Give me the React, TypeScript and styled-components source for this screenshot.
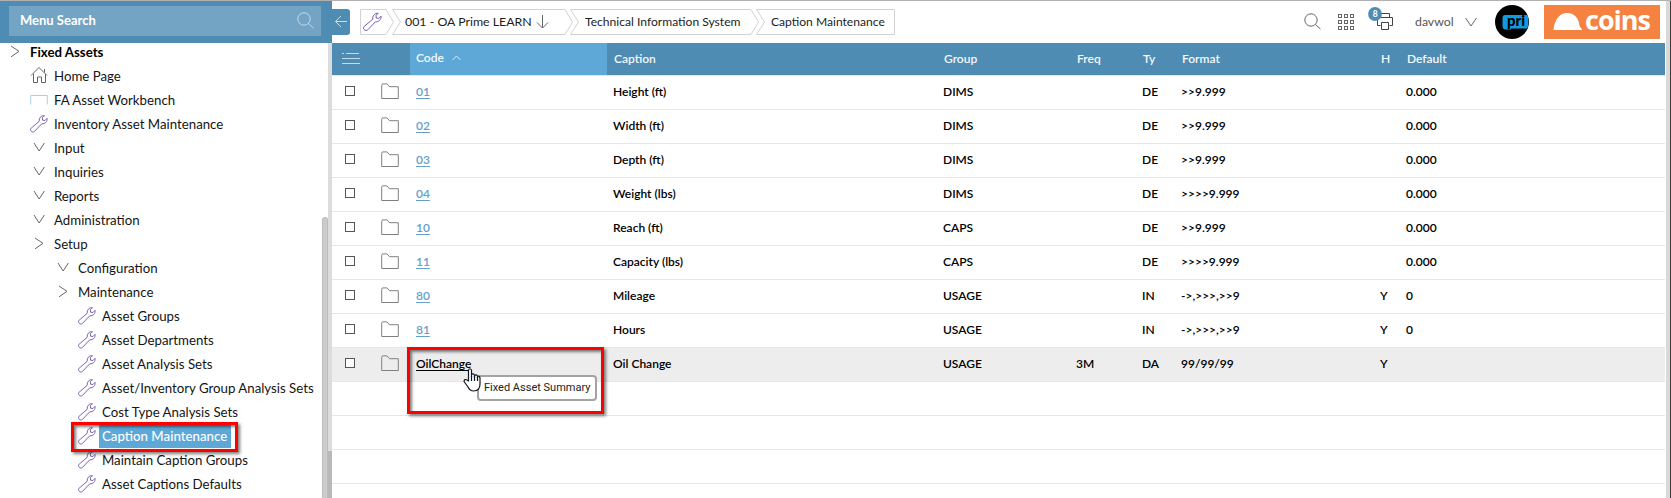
import React from 'react';
import styled, { createGlobalStyle } from 'styled-components';

const Global = createGlobalStyle`
  * { box-sizing: border-box; }
  html, body { margin: 0; padding: 0; overflow: hidden; background: #fff; }
  body { font-family: Lato, "Liberation Sans", sans-serif; font-size: 13px; color: #000; }
`;

const blue = '#4f8cb3';
const lightBlue = '#5ea8d7';

const Page = styled.div`
  width: 1671px; height: 498px; display: flex; overflow: hidden; position: relative;
  border-top: 1px solid #b3b0b3;
`;
const Sidebar = styled.aside`
  width: 332px; flex: none; display: flex; flex-direction: column;
`;
const SearchBar = styled.div`
  height: 42px; flex: none; background: ${blue}; padding: 5px 11px 7px 9px; position: relative; z-index: 1;
`;
const SearchField = styled.div`
  height: 30px; background: #74a4c3; color: #fff; font-weight: 700; font-size: 13px;
  display: flex; align-items: center; justify-content: space-between; padding: 0 7px 2px 11px;
`;
const SideBody = styled.div`
  flex: 1; display: flex; min-height: 0;
`;
const Tree = styled.div`
  flex: 1; margin-top: -4px;
`;
const TreeRow = styled.div<{ $level: number; $bold?: boolean }>`
  height: 24px; display: flex; align-items: center; white-space: nowrap; font-size: 13.25px;
  padding-left: ${p => 6 + p.$level * 24}px; color: ${p => (p.$bold ? '#000' : '#141414')};
  font-weight: ${p => (p.$bold ? 700 : 400)};
`;
const TreeIcon = styled.span`
  width: 18px; height: 18px; margin-right: 3px; display: flex; flex: none;
`;
const TreeLabel = styled.span<{ $active?: boolean }>`
  height: 23px; line-height: 22px; margin-top: 3px; padding: 0 4px 0 3px;
  background: ${p => (p.$active ? lightBlue : 'transparent')};
  color: ${p => (p.$active ? '#fff' : 'inherit')};
  font-weight: ${p => (p.$active ? 500 : 'inherit')};
`;
const ScrollTrack = styled.div`
  width: 6px; padding-top: 174px; display: flex; flex: none;
`;
const ScrollThumb = styled.div`
  flex: 1; background: #cbcbcb; border: 1px solid #bdbdbd; border-bottom: 0; border-radius: 3px 3px 0 0;
`;
const Splitter = styled.div`
  width: 4px; flex: none; background: linear-gradient(#dcdcdc 408px, #b9b9b9 408px);
`;
const Main = styled.main`
  width: 1333px; flex: none; display: flex; flex-direction: column;
`;
const TopBar = styled.header`
  height: 42px; flex: none; display: flex; align-items: flex-start; justify-content: space-between;
`;
const TopLeft = styled.div`
  display: flex; padding-top: 8px;
`;
const Collapse = styled.div`
  width: 18px; height: 26px; background: ${blue}; border-radius: 0 3px 3px 0; margin-right: 10px;
  display: flex; align-items: center; justify-content: center;
`;
const Crumbs = styled.nav`
  display: flex; height: 26px;
`;
const Crumb = styled.div<{ $w: number; $pad: number; $gap: number; $size?: number }>`
  width: ${p => p.$w}px; padding: 0 0 1px ${p => p.$pad}px; margin-right: ${p => p.$gap}px; height: 26px;
  position: relative; display: flex; align-items: center; white-space: nowrap; color: #1c1c1c;
  font-size: ${p => p.$size ?? 12.1}px;
  > svg.frame { position: absolute; left: 0; top: 0; }
`;
const CrumbArrow = styled.svg`
  margin-left: 3px;
`;
const TopRight = styled.div`
  display: flex; align-items: flex-start; padding-right: 5px; padding-top: 4px;
`;
const Tool = styled.div<{ $mr: number; $mt: number }>`
  display: flex; margin-right: ${p => p.$mr}px; margin-top: ${p => p.$mt}px;
`;
const User = styled.span`
  margin: 8px 13px 0 0; width: 37px; line-height: 17px; font-size: 12.3px; color: #555;
`;
const Avatar = styled.div`
  width: 34px; height: 34px; margin-right: 15px; display: flex;
`;
const Brand = styled.div`
  width: 116px; height: 34px; background: #f58241; display: flex;
`;
const cols = '78px 197px 330px 133px 66px 39px 199px 26px 1fr';
const HeadRow = styled.div`
  height: 32px; flex: none; background: ${blue}; color: #f4f8fb; display: grid;
  grid-template-columns: ${cols}; font-weight: 600; font-size: 12px;
`;
const HeadCell = styled.div<{ $sorted?: boolean }>`
  display: flex; align-items: center; padding: 0 0 1px 7px;
  ${p => p.$sorted && `background: ${lightBlue}; padding: 0 0 3px 6px; gap: 8px;`}
`;
const HeadIcon = styled.div`
  display: flex; padding: 9px 0 0 10px;
`;
const Grid = styled.div`
  flex: 1; border-top: 1px solid #e6e6e6; overflow: hidden;
`;
const Row = styled.div<{ $hover?: boolean }>`
  height: 34px; border-bottom: 1px solid #e6e6e6; display: grid; grid-template-columns: ${cols};
  padding-bottom: 2px;
  align-items: center; font-weight: 600; font-size: 12px; background: ${p => (p.$hover ? '#ededed' : '#fff')};
`;
const Cell = styled.div`
  padding-left: 6px; white-space: pre;
`;
const Picks = styled.div`
  display: flex; align-items: center; padding-left: 13px; gap: 26px;
`;
const Box = styled.span`
  width: 10px; height: 10px; border: 1px solid #555; background: #fff; margin-top: -2px;
`;
const Link = styled.a<{ $hover?: boolean }>`
  color: ${p => (p.$hover ? '#000' : '#669fc9')}; text-decoration: underline; text-underline-offset: 2px;
`;
const Edge = styled.div`
  flex: 1; margin-left: 1px; background: #d9d9d9; border-right: 1px solid #3c3c3c;
`;
const Callout = styled.div<{ $x: number; $y: number; $w: number; $h: number }>`
  position: absolute; left: ${p => p.$x}px; top: ${p => p.$y}px; width: ${p => p.$w}px; height: ${p => p.$h}px;
  border: 3px solid #fe0000; z-index: 2;
  box-shadow: 2px 2px 3px rgba(0,0,0,.5), inset 2px 2px 3px rgba(0,0,0,.5);
`;
const Tooltip = styled.div`
  position: absolute; left: 477px; top: 374px; width: 120px; height: 26px; z-index: 3; background: #fff;
  border: 2px solid #a3a3a3; border-radius: 4px; font: 11px/22px Roboto, "Liberation Sans", sans-serif;
  color: #222; padding-left: 5px; white-space: nowrap;
`;
const Pointer = styled.div`
  position: absolute; left: 462px; top: 366px; z-index: 4; display: flex;
`;

const Wrench = () => (
  <svg width="19" height="19" viewBox="0 0 19 19" fill="none" stroke="#775ab0" strokeWidth="1">
    <path d="M1.2 14.4 L9.8 7.2 C9.3 4 11.6.8 15.3 1.3 L12.9 3.4 L13.3 6 L15.8 6.4 L18 4.1 C18.6 7.4 15.8 10.2 12.4 9.8 L4.8 17.8 C3.8 18.8 2.2 18.7 1.2 17.6 C.2 16.6.3 15.4 1.2 14.4Z" />
  </svg>
);
const House = () => (
  <svg width="18" height="18" viewBox="0 0 18 18" fill="none" stroke="#666">
    <path d="M1 9.5 9 1.5 17 9.5M3.5 8V16.5H7.500V11H11.500V16.5H15.500V8M14.5 6.5V3" />
  </svg>
);
const Bench = () => (
  <svg width="18" height="18" viewBox="0 0 18 18" fill="none" stroke="#a9d0e2">
    <path d="M.7 14.5V5.500H17.3V14.5" />
  </svg>
);
const Down = () => (
  <svg width="18" height="18" viewBox="0 0 18 18" fill="none" stroke="#666">
    <path d="M4 5 9.2 13 14.4 5" />
  </svg>
);
const Right = () => (
  <svg width="18" height="18" viewBox="0 0 18 18" fill="none" stroke="#666">
    <path d="M5 4 13 9.4 5 14.8" />
  </svg>
);
const Folder = () => (
  <svg width="18" height="17" viewBox="0 0 18 17" fill="none" stroke="#808080">
    <path d="M.7 15.5V2.2Q.7.9 2 .9H6L8.5 3.7H17.3V15.5Z" />
  </svg>
);
const Magnifier = ({ color }: { color: string }) => (
  <svg width="17" height="17" viewBox="0 0 17 17" fill="none" stroke={color}>
    <circle cx="7" cy="7" r="6.2" /><path d="M11.4 11.4 16.5 16.2" />
  </svg>
);
const icons = { wrench: Wrench, house: House, bench: Bench, down: Down, right: Right };

const tree: [number, keyof typeof icons, string][] = [
  [0, 'right', 'Fixed Assets'],
  [1, 'house', 'Home Page'],
  [1, 'bench', 'FA Asset Workbench'],
  [1, 'wrench', 'Inventory Asset Maintenance'],
  [1, 'down', 'Input'],
  [1, 'down', 'Inquiries'],
  [1, 'down', 'Reports'],
  [1, 'down', 'Administration'],
  [1, 'right', 'Setup'],
  [2, 'down', 'Configuration'],
  [2, 'right', 'Maintenance'],
  [3, 'wrench', 'Asset Groups'],
  [3, 'wrench', 'Asset Departments'],
  [3, 'wrench', 'Asset Analysis Sets'],
  [3, 'wrench', 'Asset/Inventory Group Analysis Sets'],
  [3, 'wrench', 'Cost Type Analysis Sets'],
  [3, 'wrench', 'Caption Maintenance'],
  [3, 'wrench', 'Maintain Caption Groups'],
  [3, 'wrench', 'Asset Captions Defaults'],
];

const rows = [
  ['01', 'Height (ft)', 'DIMS', '', 'DE', '>>9.999', '', '0.000'],
  ['02', 'Width (ft)', 'DIMS', '', 'DE', '>>9.999', '', '0.000'],
  ['03', 'Depth (ft)', 'DIMS', '', 'DE', '>>9.999', '', '0.000'],
  ['04', 'Weight (lbs)', 'DIMS', '', 'DE', '>>>>9.999', '', '0.000'],
  ['10', 'Reach (ft)', 'CAPS', '', 'DE', '>>9.999', '', '0.000'],
  ['11', 'Capacity (lbs)', 'CAPS', '', 'DE', '>>>>9.999', '', '0.000'],
  ['80', 'Mileage', 'USAGE', '', 'IN', '->,>>>,>>9', 'Y', '0'],
  ['81', 'Hours', 'USAGE', '', 'IN', '->,>>>,>>9', 'Y', '0'],
  ['OilChange', 'Oil Change', 'USAGE', '3M', 'DA', '99/99/99', 'Y', ''],
];

const Frame = ({ w, first, last }: { w: number; first?: boolean; last?: boolean }) => (
  <svg className="frame" width={w} height="26" fill="none" stroke="#d2d2d2">
    <path d={`M.5 .5H${last ? w - 0.5 : w - 8}L${w - 0.5} ${last ? 25.5 : 13}${last ? '' : `L${w - 8} 25.5`}H.5${first ? '' : 'L8.500 13'}Z`} />
  </svg>
);

export default function App() {
  return (
    <Page>
      <Global />
      <Sidebar>
        <SearchBar><SearchField>Menu Search<Magnifier color="#c3dbea" /></SearchField></SearchBar>
        <SideBody>
          <Tree>
            {tree.map(([level, icon, label]) => {
              const Icon = icons[icon];
              return (
                <TreeRow key={label} $level={level} $bold={level === 0}>
                  <TreeIcon><Icon /></TreeIcon>
                  <TreeLabel $active={label === 'Caption Maintenance'}>{label}</TreeLabel>
                </TreeRow>
              );
            })}
          </Tree>
          <ScrollTrack><ScrollThumb /></ScrollTrack>
          <Splitter />
        </SideBody>
      </Sidebar>
      <Main>
        <TopBar>
          <TopLeft>
            <Collapse>
              <svg width="14" height="14" fill="none" stroke="#c8e0ee"><path d="M13 6.500H1.5M7 1 1.5 6.500 7 12" /></svg>
            </Collapse>
            <Crumbs>
              <Crumb $w={34} $pad={3} $gap={-2}><Frame w={34} first /><Wrench /></Crumb>
              <Crumb $w={181} $pad={13} $gap={-3} $size={12.35}>
                <Frame w={181} />001 - OA Prime LEARN
                <CrumbArrow width="14" height="16" fill="none" stroke="#666"><path d="M7.500 1V14M2 8.5 7.500 14 13 8.5" /></CrumbArrow>
              </Crumb>
              <Crumb $w={189} $pad={15} $gap={-3}><Frame w={189} />Technical Information System</Crumb>
              <Crumb $w={139} $pad={15} $gap={0}><Frame w={139} last />Caption Maintenance</Crumb>
            </Crumbs>
          </TopLeft>
          <TopRight>
            <Tool $mr={17} $mt={8}><Magnifier color="#666" /></Tool>
            <Tool $mr={14} $mt={9}>
              <svg width="16" height="17" fill="none" stroke="#666">
                {[0, 6, 12].map(y => [0, 6, 12].map(x => <rect key={`${x}-${y}`} x={x + 0.5} y={y + 0.5} width="3" height="3" />))}
              </svg>
            </Tool>
            <Tool $mr={21} $mt={2}>
              <svg width="26" height="25" fill="none" stroke="#444">
                <path d="M12.5 10.5V6.500H21.500V10.500M12.500 18.500H9.500V10.500H24.500V18.500H21.500M13.500 15.500H20.500V22.500H13.500Z" />
                <circle cx="7" cy="7" r="6.9" fill={blue} stroke="none" />
                <text x="7.300" y="9.500" textAnchor="middle" fill="#fff" stroke="none" fontSize="8.500" fontWeight="700">8</text>
              </svg>
            </Tool>
            <User>davwol</User>
            <Tool $mr={18} $mt={8}><svg width="12" height="18" fill="none" stroke="#666"><path d="M.5 5 6 13 11.500 5" /></svg></Tool>
            <Avatar>
              <svg width="34" height="34">
                <circle cx="17" cy="17" r="17" fill="#000" />
                <path d="M10.500 10H32.500Q34.500 17 32.300 23.500H16V24.500H11Q7.500 24.500 7.500 21V13Q7.500 10 10.500 10Z" fill="#109be0" />
                <text x="12" y="21" fontSize="15" fontWeight="900">pri</text>
              </svg>
            </Avatar>
            <Brand>
              <svg width="116" height="34">
                <path d="M9.500 25C10.500 14 16 8 23 8C31 8 35 14 35.500 21L38 24.500V25Z" fill="#fff" />
                <text x="41" y="25" fill="#fff" fontFamily="Open Sans" fontWeight="700" fontSize="27" textLength="66">coins</text>
              </svg>
            </Brand>
          </TopRight>
        </TopBar>
        <HeadRow>
          <HeadIcon>
            <svg width="18" height="13" stroke="#c3dbea"><path d="M0 1.500H2M4 1.500H17M0 6.500H18M0 11.500H18" /></svg>
          </HeadIcon>
          <HeadCell $sorted>Code<svg width="9" height="6" fill="none" stroke="#d6e9f5"><path d="M.5 5 4.500 1 8.500 5" /></svg></HeadCell>
          {['Caption', 'Group', 'Freq', 'Ty', 'Format', 'H', 'Default'].map(h => <HeadCell key={h}>{h}</HeadCell>)}
        </HeadRow>
        <Grid>
          {rows.map((r, i) => (
            <Row key={r[0]} $hover={i === 8}>
              <Picks><Box /><Folder /></Picks>
              <Cell><Link $hover={i === 8}>{r[0]}</Link></Cell>
              {r.slice(1).map((c, j) => <Cell key={j}>{c}</Cell>)}
            </Row>
          ))}
          <Row /><Row /><Row /><Row />
        </Grid>
      </Main>
      <Edge />
      <Callout $x={71} $y={421} $w={167} $h={30} />
      <Callout $x={407} $y={346} $w={197} $h={67} />
      <Tooltip>Fixed Asset Summary</Tooltip>
      <Pointer>
        <svg width="20" height="25" fill="#fff" stroke="#111522" strokeWidth="1.200" strokeLinejoin="round">
          <path d="M6.500 14V3Q8 .500 9.500 3V10V7.500Q11.200 6 12.500 8V10.500V8.500Q14.500 7 15.500 9V11V9.500Q17.500 8.500 18 11V17Q18 24 11.500 24Q8 24 6 20L2 14.500Q2.500 11.500 5 13Z" />
          <path d="M9.500 9V14M12.500 9V14M15.500 10V14" fill="none" />
        </svg>
      </Pointer>
    </Page>
  );
}
